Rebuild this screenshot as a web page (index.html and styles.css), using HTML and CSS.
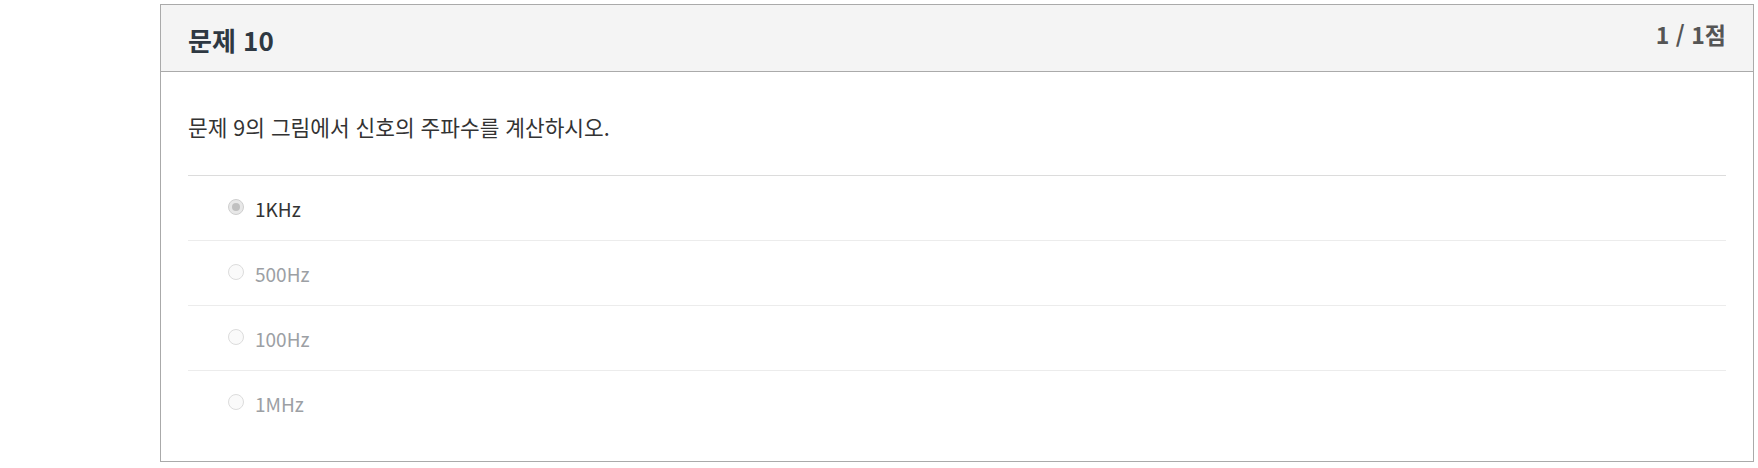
FILE: index.html
```html
<!DOCTYPE html>
<html lang="ko">
<head>
<meta charset="utf-8">
<link rel="stylesheet" href="styles.css">
</head>
<body>
<div class="card">
  <div class="card-head">
    <h2 class="title">문제 10</h2>
    <div class="score">1 / 1점</div>
  </div>
  <div class="card-body">
    <p class="question">문제 9의 그림에서 신호의 주파수를 계산하시오.</p>
    <ul class="options">
      <li class="option selected"><span class="radio"></span><span class="label">1KHz</span></li>
      <li class="option"><span class="radio"></span><span class="label">500Hz</span></li>
      <li class="option"><span class="radio"></span><span class="label">100Hz</span></li>
      <li class="option"><span class="radio"></span><span class="label">1MHz</span></li>
    </ul>
  </div>
</div>
</body>
</html>
```

FILE: styles.css
```css
* { box-sizing: border-box; }
html, body { margin: 0; background: #fff; }
body {
  padding: 4px 4px 0 160px;
  font-family: "Noto Sans CJK KR", "Noto Sans", sans-serif;
  color: #333;
}
.card {
  border: 1px solid #aaaaaa;
  height: 458px;
  background: #fff;
}
.card-head {
  height: 67px;
  background: #f4f4f4;
  border-bottom: 1px solid #aaaaaa;
  display: flex;
  justify-content: space-between;
  align-items: flex-start;
  padding: 0 27px;
}
.title {
  margin: 0;
  margin-top: 17px;
  font-size: 26px;
  line-height: 36px;
  font-weight: 700;
  color: #2e3842;
}
.score {
  margin-top: 14px;
  font-size: 23px;
  line-height: 30px;
  font-weight: 700;
  color: #555;
}
.card-body {
  padding: 0 27px;
}
.question {
  margin: 0;
  padding-top: 40px;
  height: 103px;
  font-size: 21.4px;
  line-height: 30px;
  color: #333;
}
.options {
  list-style: none;
  margin: 0;
  padding: 0;
}
.option {
  height: 65px;
  border-top: 1px solid #ececec;
  display: flex;
  align-items: center;
  padding-left: 40px;
  font-size: 19px;
  color: #9ca0a4;
}
.option:first-child { border-top-color: #dcdcdc; }
.radio {
  width: 16px;
  height: 16px;
  border-radius: 50%;
  border: 1px solid #dcdcdc;
  background: #fafafa;
  margin-right: 11px;
  margin-top: -2px;
  position: relative;
}
.selected { color: #333; }
.selected .radio {
  border-color: #cfcfcf;
  background: #e8e8e8;
}
.selected .radio::after {
  content: "";
  position: absolute;
  left: 3px;
  top: 3px;
  width: 8px;
  height: 8px;
  border-radius: 50%;
  background: #c0c0c0;
}
```
